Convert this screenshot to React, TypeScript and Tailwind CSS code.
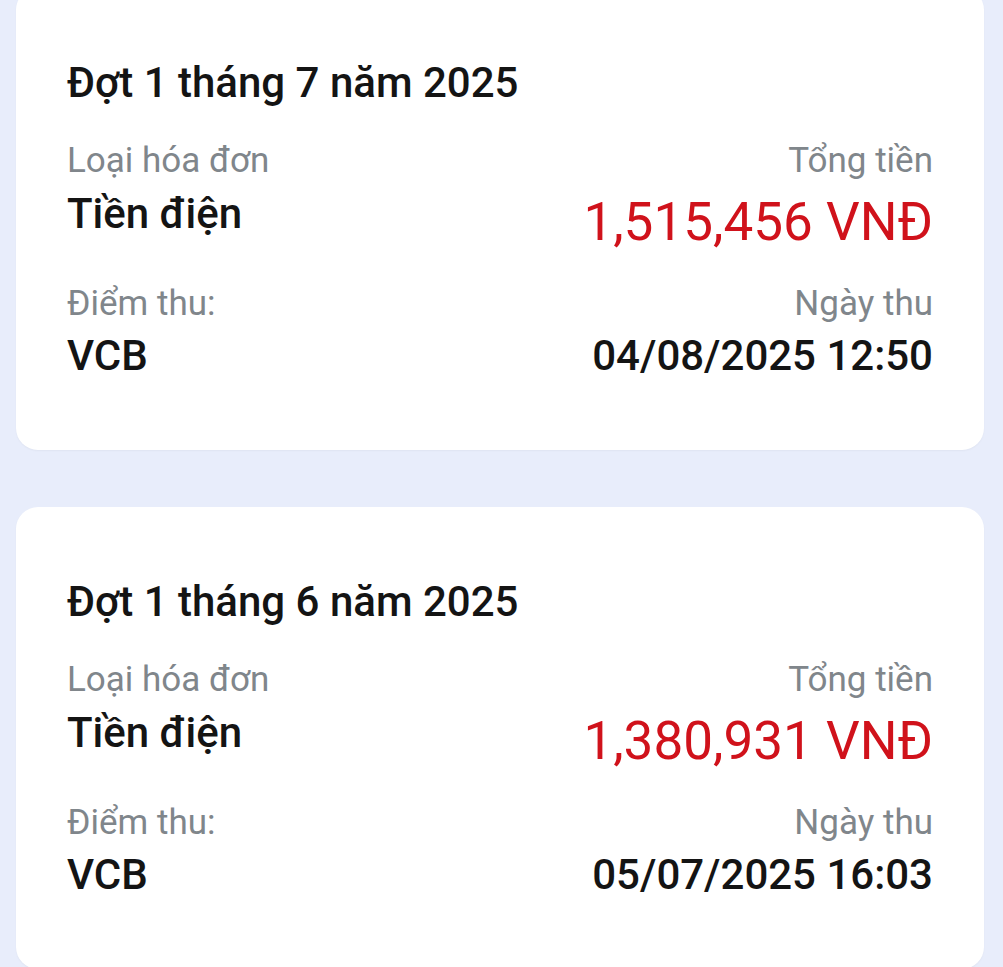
import React from "react";

type Bill = {
  title: string;
  type: string;
  amount: string;
  place: string;
  date: string;
};

const bills: Bill[] = [
  {
    title: "Đợt 1 tháng 7 năm 2025",
    type: "Tiền điện",
    amount: "1,515,456 VNĐ",
    place: "VCB",
    date: "04/08/2025 12:50",
  },
  {
    title: "Đợt 1 tháng 6 năm 2025",
    type: "Tiền điện",
    amount: "1,380,931 VNĐ",
    place: "VCB",
    date: "05/07/2025 16:03",
  },
];

function BillCard({ bill }: { bill: Bill }) {
  return (
    <div className="ml-4 mr-[19px] h-[462px] rounded-[22px] bg-white px-[51px] pt-[70px] shadow-[0_1px_2px_rgba(0,0,0,0.04)]">
      <div className="text-[42px] leading-[50px] font-medium text-[#141414]">{bill.title}</div>

      <div className="mt-[32px] flex items-start justify-between">
        <div className="flex flex-col">
          <div className="text-[35px] leading-[42px] text-[#80868b]">Loại hóa đơn</div>
          <div className="mt-[7px] text-[42px] leading-[50px] font-medium text-[#141414]">{bill.type}</div>
        </div>
        <div className="flex flex-col items-end text-right">
          <div className="text-[35px] leading-[42px] text-[#80868b]">Tổng tiền</div>
          <div className="mt-[9px] text-[53px] leading-[62px] text-[#d0121b]">{bill.amount}</div>
        </div>
      </div>

      <div className="mt-[30px] flex items-start justify-between">
        <div className="flex flex-col">
          <div className="text-[35px] leading-[42px] text-[#80868b]">Điểm thu:</div>
          <div className="mt-[6px] text-[42px] leading-[50px] font-medium text-[#141414]">{bill.place}</div>
        </div>
        <div className="flex flex-col items-end text-right">
          <div className="text-[35px] leading-[42px] text-[#80868b]">Ngày thu</div>
          <div className="mt-[6px] text-[42px] leading-[50px] font-medium text-[#141414]">{bill.date}</div>
        </div>
      </div>
    </div>
  );
}

export default function App() {
  return (
    <div
      className="h-[967px] w-full overflow-hidden bg-[#e8edfb]"
      style={{ fontFamily: "Roboto, 'Noto Sans', sans-serif" }}
    >
      <div className="-mt-[12px] flex flex-col gap-[57px]">
        {bills.map((b) => (
          <BillCard key={b.title} bill={b} />
        ))}
      </div>
    </div>
  );
}
